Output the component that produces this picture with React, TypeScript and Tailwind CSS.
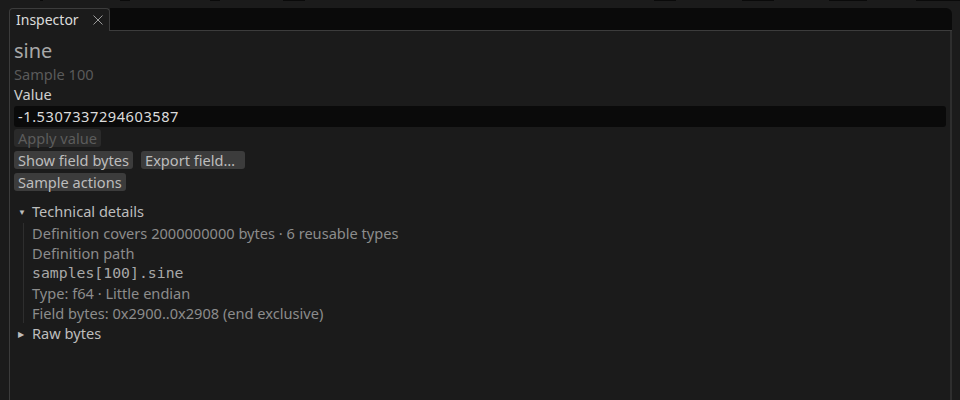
const details = [
  'Definition covers 2000000000 bytes · 6 reusable types',
  'Definition path',
]

function Btn({ label, disabled, className = '' }: { label: string; disabled?: boolean; className?: string }) {
  return (
    <span
      className={
        'h-[18px] px-[4px] rounded-[3px] flex items-center text-[14.6px] leading-none ' +
        (disabled ? 'bg-[#2a2a2a] text-[#5c5c5c] ' : 'bg-[#3c3c3c] text-[#bdbdbd] ') +
        className
      }
    >
      {label}
    </span>
  )
}

export default function App() {
  return (
    <div className="w-[960px] h-[400px] bg-[#1b1b1b] overflow-hidden flex flex-col font-['Noto_Sans',sans-serif]">
      {/* clipped stuff above */}
      <div className="h-px flex">
        <div className="w-[40px]" />
        <div className="w-[3px] bg-[#0a0a0a]" />
        <div className="w-[77px]" />
        <div className="w-[10px] bg-[#0a0a0a]" />
        <div className="w-[80px]" />
        <div className="w-[10px] bg-[#0a0a0a]" />
        <div className="w-[63px]" />
        <div className="w-[22px] bg-[#0a0a0a]" />
        <div className="w-[349px]" />
        <div className="w-[22px] bg-[#0a0a0a]" />
        <div className="w-[66px]" />
        <div className="w-[32px] bg-[#0a0a0a]" />
        <div className="w-[55px]" />
        <div className="w-[38px] bg-[#0a0a0a]" />
        <div className="w-[49px]" />
        <div className="flex-1 bg-[#0a0a0a]" />
      </div>
      <div className="h-[7px]" />

      {/* tab bar */}
      <div className="flex h-[23px] pl-[9px] pr-[8px]">
        <div className="w-[101px] border border-b-0 border-[#3c3c3c] rounded-t-[4px] flex items-center pl-[6px] pr-[6px] justify-between">
          <span className="text-[14px] text-[#dcdcdc] leading-none">Inspector</span>
          <svg width="10" height="10" viewBox="0 0 10 10" className="text-[#9a9a9a]">
            <path d="M0.5 0.5 L9.5 9.5 M9.5 0.5 L0.5 9.5" stroke="currentColor" strokeWidth="1" fill="none" />
          </svg>
        </div>
        <div className="flex-1 bg-[#0a0a0a] rounded-tr-[6px] border-b border-[#3c3c3c]" />
      </div>

      {/* panel body */}
      <div className="flex-1 ml-[9px] mr-[8px] border-l border-[#3c3c3c] border-r-2 border-r-[#2e2e2e] pl-[4px] pr-[4px] pt-[8px] flex flex-col">
        <div className="text-[20px] leading-[24px] text-[#a8a8a8]">sine</div>
        <div className="text-[14.6px] leading-[20px] text-[#5a5a5a] mt-[1px]">Sample 100</div>
        <div className="text-[14.6px] leading-[20px] text-[#cfcfcf]">Value</div>
        <div className="mt-[2px] h-[21px] bg-[#0a0a0a] rounded-[3px] flex items-center pl-[4px] text-[14.6px] tracking-[0.55px] text-[#dcdcdc]">
          -1.5307337294603587
        </div>
        <div className="flex mt-[2px]">
          <Btn label="Apply value" disabled />
        </div>
        <div className="flex gap-[8px] mt-[4px]">
          <Btn label="Show field bytes" />
          <Btn label="Export field…" className="pr-[10px]" />
        </div>
        <div className="flex mt-[4px]">
          <Btn label="Sample actions" />
        </div>

        {/* technical details */}
        <div className="mt-[11px] flex items-center h-[20px] pl-[4px] text-[14.6px] text-[#bdbdbd]">
          <span className="w-[14px] text-[8px] text-[#bdbdbd] leading-none">▼</span>
          <span>Technical details</span>
        </div>
        <div className="mt-[1px] ml-[9px] border-l border-[#2e2e2e] pl-[8px] flex flex-col text-[14.6px] text-[#8c8c8c]">
          {details.map((d) => (
            <div key={d} className="h-[20px] leading-[20px]">{d}</div>
          ))}
          <div className="h-[20px] leading-[20px] font-['DejaVu_Sans_Mono',monospace] text-[14.8px] text-[#a8a8a8]">
            samples[100].sine
          </div>
          <div className="h-[20px] leading-[20px]">Type: f64 · Little endian</div>
          <div className="h-[20px] leading-[20px]">Field bytes: 0x2900..0x2908 (end exclusive)</div>
        </div>
        <div className="mt-[1px] flex items-center h-[20px] pl-[4px] text-[14.6px] text-[#bdbdbd]">
          <span className="w-[14px] text-[8px] leading-none">▶</span>
          <span>Raw bytes</span>
        </div>
      </div>
    </div>
  )
}
